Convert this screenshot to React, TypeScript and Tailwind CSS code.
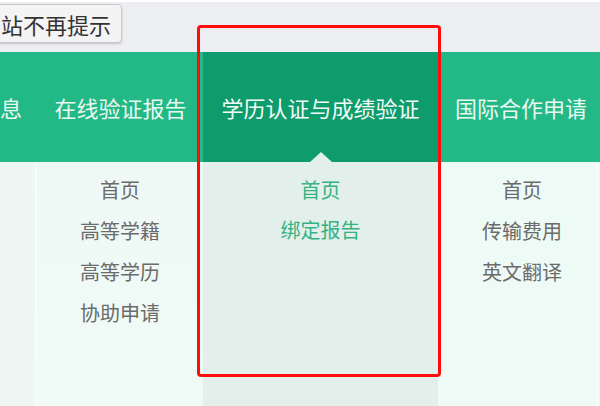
import React from "react";

const font = "font-['Noto_Sans_CJK_SC','Noto_Sans',sans-serif]";

export default function App() {
  return (
    <div className={`relative w-[600px] h-[406px] overflow-hidden bg-[#eef9f5] ${font}`}>
      {/* top bar */}
      <div className="h-[52px] bg-[#eceef2] border-t-2 border-white pt-[2px]">
        <button className="h-[39px] -ml-[8px] pl-[8px] pr-[10px] flex items-center bg-[#f4f4f5] border border-[#c9c9cc] rounded-[4px] shadow-[0_1px_2px_rgba(0,0,0,0.18)] text-[22px] leading-none text-[#333] whitespace-nowrap">
          站不再提示
        </button>
      </div>

      {/* nav */}
      <div className="flex h-[110px] bg-[#22b987] text-[22px] text-[#eaf8f1] leading-none">
        <div className="w-[38px] shrink-0 flex items-center">
          <span className="whitespace-nowrap">息</span>
        </div>
        <div className="w-[165px] shrink-0 flex items-center justify-center whitespace-nowrap">在线验证报告</div>
        <div className="relative w-[235px] shrink-0 flex items-center justify-center whitespace-nowrap bg-[#0e9c6c] text-[#f2fbf6]">
          学历认证与成绩验证
          <span className="absolute bottom-0 left-[107px] w-0 h-0 border-l-[11px] border-r-[11px] border-b-[10px] border-l-transparent border-r-transparent border-b-[#e3efeb]" />
        </div>
        <div className="w-[162px] shrink-0 flex items-center justify-center whitespace-nowrap pl-[4px]">国际合作申请</div>
      </div>

      {/* dropdown */}
      <div className="flex h-[244px] text-[20px] leading-none">
        <div className="w-[37px] shrink-0 bg-[#eef7f4] border-r-[2px] border-[#f7fcfa]" />
        <div className="w-[166px] shrink-0 flex flex-col items-center pt-[18px] gap-[21px] text-[#6b6b6b] bg-[linear-gradient(#eef9f5,#f0faf6)]">
          <span>首页</span>
          <span>高等学籍</span>
          <span>高等学历</span>
          <span>协助申请</span>
        </div>
        <div className="w-[235px] shrink-0 flex flex-col items-center pt-[18px] gap-[20px] text-[#35b383] bg-[#e3efeb]">
          <span>首页</span>
          <span>绑定报告</span>
        </div>
        <div className="w-[160px] shrink-0 flex flex-col items-center pt-[18px] pl-[10px] gap-[21px] text-[#6b6b6b] bg-[#eefaf6] border-r-[2px] border-[#f8fdfb]">
          <span>首页</span>
          <span>传输费用</span>
          <span>英文翻译</span>
        </div>
      </div>

      {/* red annotation box */}
      <div className="absolute left-[197px] top-[25px] w-[244px] h-[352px] border-[3px] border-[#ff0d0d] rounded-[4px]" />
    </div>
  );
}
